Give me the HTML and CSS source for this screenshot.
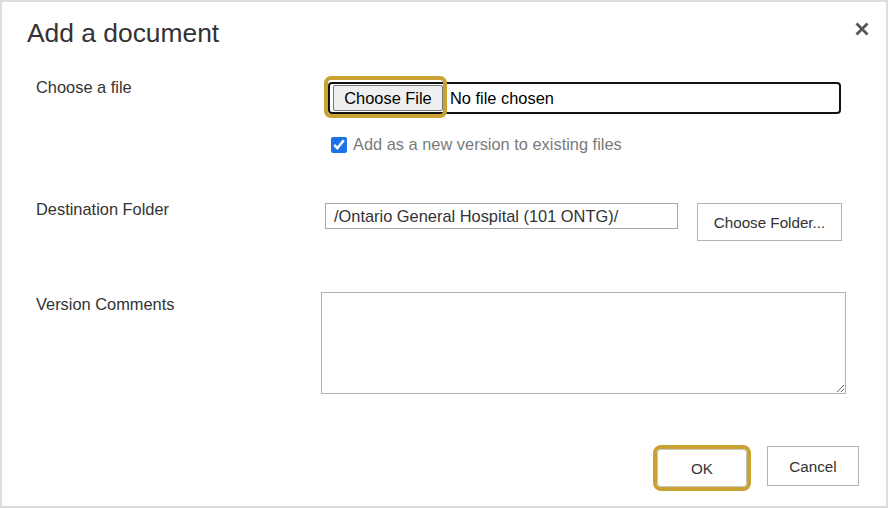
FILE: index.html
```html
<!DOCTYPE html>
<html>
<head>
<meta charset="utf-8">
<link rel="stylesheet" href="styles.css">
</head>
<body>
<div class="dialog">
  <div class="header">
    <h1 class="title">Add a document</h1>
    <svg class="close" width="14" height="14" viewBox="0 0 14 14"><path d="M1.5 1.5L12.5 12.5M12.5 1.5L1.5 12.5" stroke="#555" stroke-width="2.8" stroke-linecap="butt"/></svg>
  </div>
  <div class="row row-file">
    <div class="label">Choose a file</div>
    <div class="control file-cell">
      <div class="file-box">
        <span class="file-btn">Choose File</span>
        <span class="file-name">No file chosen</span>
      </div>
      <span class="ring ring-file"></span>
    </div>
  </div>
  <div class="row row-check">
    <div></div>
    <label class="check">
      <input type="checkbox" checked>
      <span>Add as a new version to existing files</span>
    </label>
  </div>
  <div class="row row-dest">
    <div class="label">Destination Folder</div>
    <div class="control dest-cell">
      <input class="dest-input" type="text" value="/Ontario General Hospital (101 ONTG)/">
      <button class="btn folder-btn">Choose Folder...</button>
    </div>
  </div>
  <div class="row row-comments">
    <div class="label label-comments">Version Comments</div>
    <div class="control">
      <textarea class="comments"></textarea>
    </div>
  </div>
  <div class="footer">
    <button class="btn ok-btn">OK</button>
    <button class="btn cancel-btn">Cancel</button>
  </div>
</div>
</body>
</html>
```
FILE: styles.css
```css
* { box-sizing: border-box; }
html, body { margin: 0; padding: 0; background: #fff; }
body { font-family: "Liberation Sans", Arial, sans-serif; color: #333; }

.dialog {
  width: 888px;
  height: 508px;
  border: 2px solid #dcdcdc;
  background: #fff;
  display: flex;
  flex-direction: column;
}

.header {
  display: flex;
  justify-content: space-between;
  align-items: flex-start;
  padding: 16px 17px 0 25px;
}
.title {
  margin: 0;
  font-weight: normal;
  font-size: 26.4px;
  line-height: 30px;
  color: #333;
}
.close { margin-top: 4px; }

.row {
  display: grid;
  grid-template-columns: 288px 1fr;
  padding-left: 34px;
}
.label {
  font-size: 16.4px;
  line-height: 20px;
  padding-top: 1px;
  color: #333;
}
.control { position: relative; }

.row-file { margin-top: 28px; }
.file-box {
  margin-top: 6px;
  margin-left: 4px;
  width: 513px;
  height: 32px;
  border: 2px solid #111;
  border-radius: 4px;
  display: flex;
  align-items: center;
  padding-left: 3px;
  font-size: 16.4px;
  color: #000;
}
.file-btn {
  width: 110px;
  height: 26px;
  border: 1px solid #767676;
  border-radius: 2px;
  background: #efefef;
  display: flex;
  align-items: center;
  justify-content: center;
  color: #000;
}
.file-name { margin-left: 7px; }

.ring {
  position: absolute;
  border: 4px solid #c9a232;
  border-radius: 7px;
  pointer-events: none;
}
.ring-file { left: 0; top: 0; width: 123px; height: 42px; }

.row-check { margin-top: 20px; }
.check {
  display: flex;
  align-items: center;
  height: 20px;
  margin-left: 7px;
  padding-top: 1px;
  font-size: 16.4px;
  color: #7a7a7a;
}
.check input {
  width: 16px;
  height: 16px;
  margin: 0 6px 0 0;
  accent-color: #1a73e8;
}

.row-dest { margin-top: 44px; }
.dest-cell {
  display: flex;
  align-items: flex-start;
  margin-top: 5px;
}
.dest-input {
  margin-left: 1px;
  width: 353px;
  height: 26px;
  border: 1px solid #a9a9a9;
  border-radius: 0;
  padding: 0 0 0 8px;
  font-family: "Liberation Sans", Arial, sans-serif;
  font-size: 16.4px;
  color: #333;
  outline: none;
}
.btn {
  font-family: "Liberation Sans", Arial, sans-serif;
  font-size: 15.2px;
  color: #333;
  background: #fff;
  border: 1px solid #b4b4b4;
  border-radius: 0;
  padding: 0;
}
.folder-btn {
  margin-left: 19px;
  width: 145px;
  height: 38px;
}

.row-comments { margin-top: 51px; }
.label-comments { margin-top: 1px; }
.comments {
  display: block;
  margin-left: -3px;
  width: 525px;
  height: 102px;
  border: 1px solid #b3b3b3;
  border-radius: 0;
  resize: both;
  outline: none;
}

.footer {
  display: flex;
  justify-content: flex-end;
  align-items: flex-start;
  margin-top: 52px;
  padding-right: 27px;
}
.ok-btn {
  margin-top: 3px;
  width: 90px;
  height: 38px;
  border-color: #c4c4c4;
  outline: 4px solid #c9a232;
  outline-offset: 0;
  border-radius: 4px;
}
.cancel-btn {
  margin-left: 20px;
  width: 92px;
  height: 40px;
}
```
